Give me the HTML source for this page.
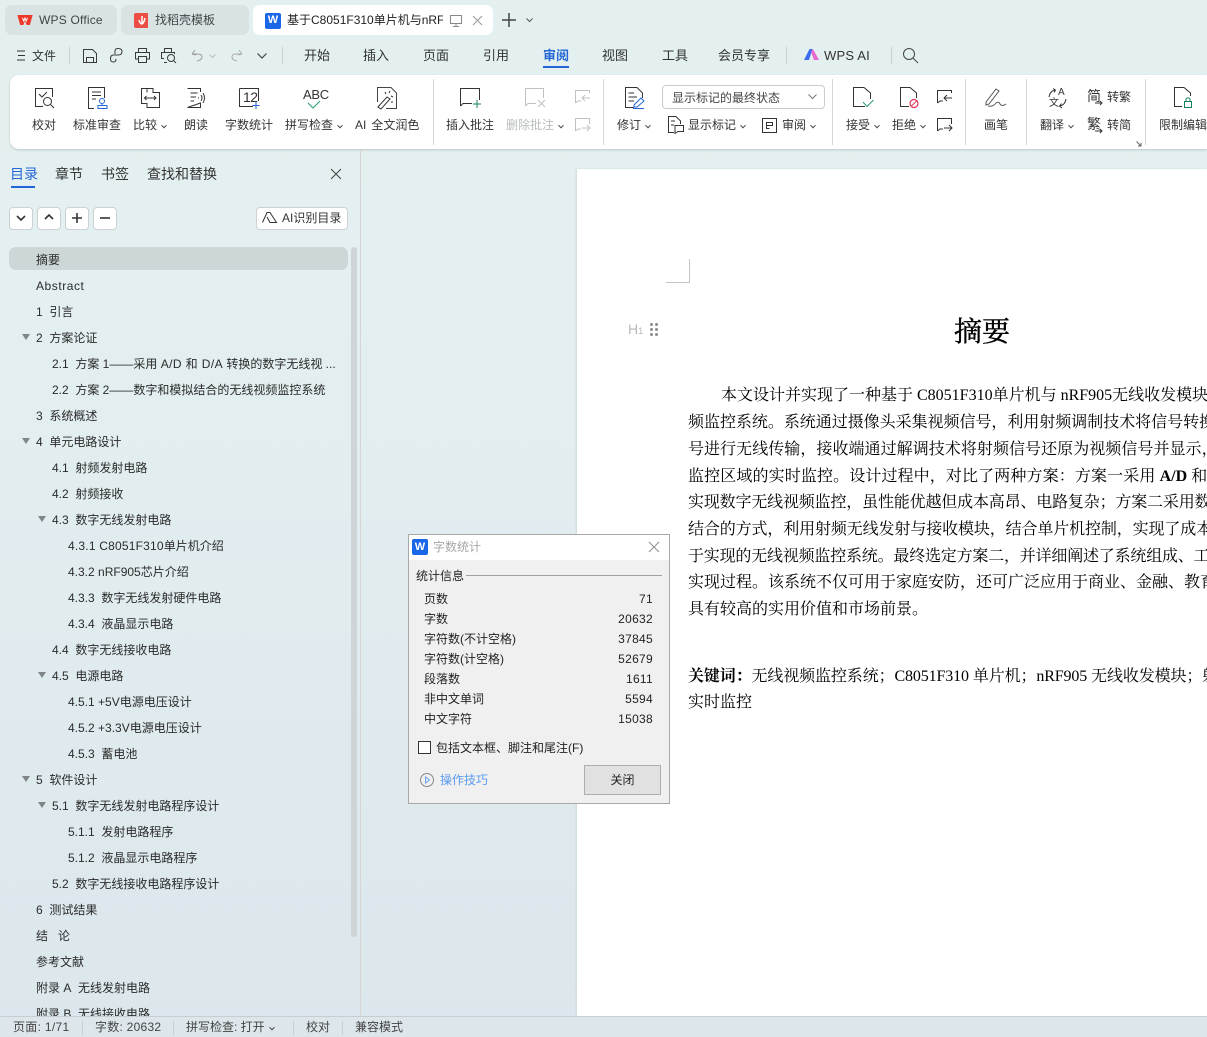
<!DOCTYPE html>
<html><head><meta charset="utf-8"><style>
html,body{margin:0;padding:0;width:1207px;height:1037px;overflow:hidden}
body{position:relative;background:linear-gradient(180deg,#e4f0f0 0,#e3eff0 300px,#dbe7ec 1037px);font-family:"Liberation Sans","Noto Sans CJK SC",sans-serif;font-size:12px;color:#333}
.a,.t,.c{position:absolute;white-space:nowrap}
.t{line-height:16px;height:16px}
.c{line-height:16px;height:16px;transform:translateX(-50%)}
svg{position:absolute;overflow:visible;fill:none;stroke:#333;stroke-width:1}
.m{font-size:13px;color:#333;top:48px}
.g{color:#b9bcbd}
.s{position:absolute;width:1px;background:#d4d8d8;top:79px;height:66px}
.v{position:absolute;width:1px;height:17px;top:47px;background:#c8d0d0}
.toc{position:absolute;font-size:12px;line-height:16px;color:#2b2b2b;white-space:nowrap;margin-top:1px}
.tri{position:absolute;width:0;height:0;border-left:4px solid transparent;border-right:4px solid transparent;border-top:6px solid #808587}
.btn{position:absolute;top:207px;width:22px;height:21px;background:#fff;border:1px solid #ccd2d3;border-radius:4px}
.d{position:absolute;left:688px;font-family:"Liberation Serif","Noto Serif CJK SC",serif;font-size:16px;line-height:26px;color:#000;white-space:nowrap}
.r{position:absolute;font-size:12px;line-height:16px;color:#222;white-space:nowrap;margin-top:1px}
.n{position:absolute;right:554px;font-size:12px;line-height:16px;color:#222;letter-spacing:.3px;margin-top:1px}
.ar:after{content:"";display:inline-block;width:3px;height:3px;border-right:1px solid #444;border-bottom:1px solid #444;transform:rotate(45deg) translate(-1px,-1px);margin-left:5px}
.tb{font-size:14px;top:166px}
</style></head><body>

<!-- tabs -->
<div class="a" style="left:5px;top:5px;width:112px;height:30px;background:#d9e3e4;border-radius:7px"></div>
<div class="a" style="left:121px;top:5px;width:128px;height:30px;background:#d9e3e4;border-radius:7px"></div>
<div class="a" style="left:253px;top:5px;width:240px;height:30px;background:#fff;border-radius:7px"></div>
<svg style="left:17px;top:14px" width="16" height="12"><path d="M1 1.500H15L12.500 10.500H10L8 5.500L6 10.500H3.500Z" fill="#ee3a2c" stroke="#ee3a2c" stroke-width="1"/><path d="M5.500 4L6.800 7L8 4L9.200 7L10.500 4" stroke="#fff" stroke-width="1"/></svg>
<div class="t" style="left:39px;top:12px;color:#3f4546;font-size:12px;letter-spacing:.2px">WPS Office</div>
<svg style="left:134px;top:13px" width="14" height="15"><path d="M2 0H14V15H2Q0 15 0 13V2Q0 0 2 0Z" fill="#ee4d45" stroke="none"/><path d="M8 3V11M5 7Q6 11 8 11Q10 10 11 5" stroke="#fff" stroke-width="1.500"/></svg>
<div class="t" style="left:155px;top:12px;color:#3f4546">找稻壳模板</div>
<div class="a" style="left:265px;top:13px;width:16px;height:16px;background:#1a66e8;border-radius:2px;color:#fff;font-weight:bold;font-size:11px;line-height:15px;text-align:center">W</div>
<div class="a" style="left:287px;top:12px;width:156px;height:16px;line-height:16px;overflow:hidden;color:#222">基于C8051F310单片机与nRF905</div>
<svg style="left:450px;top:15px" width="12" height="12"><path d="M.5 .5H11.500V8.500H.5ZM3 11.500H9M6 8.500V11.500" stroke="#888"/></svg>
<svg style="left:472px;top:15px" width="11" height="11"><path d="M1 1L10 10M10 1L1 10" stroke="#999"/></svg>
<svg style="left:502px;top:13px" width="14" height="14"><path d="M7 0V14M0 7H14" stroke="#444" stroke-width="1.500"/></svg>
<svg style="left:526px;top:18px" width="7" height="5"><path d="M.5 .5L3.500 3.500L6.500 .5" stroke="#555"/></svg>

<!-- menu row -->
<svg style="left:17px;top:50px" width="9" height="11"><path d="M0 1H8M1 5.500H8M0 10H8" stroke="#333"/></svg>
<div class="t" style="left:32px;top:48px">文件</div>
<div class="v" style="left:69px"></div>
<svg style="left:83px;top:49px" width="14" height="14"><path d="M.5 .5H9.500L13.500 4.500V13.500H.5ZM3.500 13.500V8.500H10.500V13.500" stroke="#3a3a3a"/></svg>
<svg style="left:110px;top:48px" width="13" height="16"><path d="M5 6V3Q5 .5 8 .5Q12 .5 12 3.500Q12 7 8 7H3.500Q.5 7 .5 10.500Q.5 14 3.500 14Q6 14 6 11" stroke="#3a3a3a"/></svg>
<svg style="left:135px;top:48px" width="15" height="15"><path d="M3.500 4.500V.5H11.500V4.500M3.500 11H.5V4.500H14.500V11H11.500M3.500 8.500H11.500V14.500H3.500Z" stroke="#3a3a3a"/></svg>
<svg style="left:161px;top:48px" width="16" height="15"><path d="M3.500 4.500V.5H10.500V4.500M3 10.500H.5V4.500H13.500V6M6 14.500H3" stroke="#3a3a3a"/><circle cx="10" cy="10" r="3.500" stroke="#3a3a3a"/><path d="M12.500 12.500L15 15" stroke="#3a3a3a"/></svg>
<svg style="left:191px;top:49px" width="12" height="13"><path d="M1 5L4 1M1 5L5 6M1 5H7Q11 5 11 8Q11 11 6 12" stroke="#999"/></svg>
<svg style="left:209px;top:54px" width="7" height="4"><path d="M.5 .5L3.500 3.500L6.500 .5" stroke="#bbb"/></svg>
<svg style="left:231px;top:49px" width="12" height="13"><path d="M11 5L8 1M11 5L7 6M11 5H5Q1 5 1 8Q1 11 6 12" stroke="#aaa"/></svg>
<svg style="left:257px;top:53px" width="10" height="6"><path d="M.5 .5L5 5L9.500 .5" stroke="#444" stroke-width="1.200"/></svg>
<div class="v" style="left:282px"></div>
<div class="t m" style="left:304px">开始</div>
<div class="t m" style="left:363px">插入</div>
<div class="t m" style="left:423px">页面</div>
<div class="t m" style="left:483px">引用</div>
<div class="t m" style="left:543px;color:#2567d6;font-weight:bold">审阅</div>
<div class="a" style="left:543px;top:66px;width:26px;height:2px;background:#2567d6"></div>
<div class="t m" style="left:602px">视图</div>
<div class="t m" style="left:662px">工具</div>
<div class="t m" style="left:718px">会员专享</div>
<div class="v" style="left:786px"></div>
<svg style="left:804px;top:49px" width="15" height="11"><path d="M0 11L5.500 0H8.500L5 11Z" fill="#3d6cf0" stroke="none"/><path d="M7 3L10 11H15L9 0Z" fill="#e66ad0" stroke="none"/></svg>
<div class="t" style="left:824px;top:48px;font-size:13px;color:#333;letter-spacing:.2px">WPS AI</div>
<div class="v" style="left:891px"></div>
<svg style="left:903px;top:48px" width="15" height="15"><circle cx="6" cy="6" r="5.500" stroke="#444"/><path d="M10 10L15 15" stroke="#444"/></svg>

<!-- ribbon -->
<div class="a" style="left:10px;top:75px;width:1197px;height:74px;background:#fff;border-radius:9px 0 0 9px;box-shadow:0 1px 2px #bcc8c8"></div>
<div class="s" style="left:433px"></div><div class="s" style="left:603px"></div><div class="s" style="left:832px"></div><div class="s" style="left:965px"></div><div class="s" style="left:1026px"></div><div class="s" style="left:1145px"></div>

<!-- ribbon icons -->
<svg style="left:35px;top:88px" width="20" height="21"><path d="M8 18.500H.5V.5H17.500V9M4 6L7 9L12 4" stroke="#333"/><circle cx="12.500" cy="13.500" r="4" stroke="#333"/><path d="M15.500 16.500L19 20" stroke="#333"/></svg>
<svg style="left:88px;top:87px" width="20" height="23"><path d="M6 21.500H.5V.5H16.500V11M4 5H13M4 8.500H13M4 12H8" stroke="#333"/><circle cx="14" cy="14" r="2.500" stroke="#2567d6"/><path d="M14 16.500V18M10 18.500H19V21.500H10Z" stroke="#2567d6"/></svg>
<svg style="left:141px;top:88px" width="19" height="20"><path d="M6 .5H.5V15.500H6V19.500H18.500V4.500H12V.5H6V4.500M3.500 10H15M5.500 8L3.500 10L5.500 12M13 8L15 10L13 12" stroke="#333"/></svg>
<svg style="left:187px;top:88px" width="19" height="20"><path d="M.5 .5H13.500L13.500 4M13.500 15V19.500H.5ZM3.500 5H10.500M3.500 9H9M3.500 13H7" stroke="#333"/><path d="M11 10H12M14 7Q16 10 14 13M16 5Q19 10 16 15" stroke="#333"/></svg>
<svg style="left:239px;top:88px" width="21" height="22"><path d="M.5 .5H19.500V13M14 18.500H.5V.5" stroke="#333"/><path d="M17 14V21M13.500 17.500H20.500" stroke="#2567d6"/></svg>
<div class="t" style="left:243px;top:89px;font-size:14px;color:#333;letter-spacing:-.5px">12</div>
<div class="t" style="left:303px;top:87px;font-size:13px;color:#333;letter-spacing:-.3px">ABC</div>
<svg style="left:307px;top:101px" width="15" height="9"><path d="M1 2L6 7L13 0" stroke="#2a9e6b"/></svg>
<svg style="left:377px;top:87px" width="20" height="23"><path d="M6 .5H14L19.500 6V21.500H9M.5 15V.5H6" stroke="#444"/><path d="M1 20L10 10L13 12L4 22Z" stroke="#333" fill="#fff"/><path d="M8 5L9 7M14 9L16 10M13 4L12 6M15 14L15 16" stroke="#333"/></svg>
<svg style="left:460px;top:88px" width="22" height="20"><path d="M.5 18V.5H19.500V12M.5 18L3 15.500H12" stroke="#333"/><path d="M17 12V20M13 16H21" stroke="#13845a"/></svg>
<svg style="left:525px;top:88px" width="21" height="20"><path d="M.5 18V.5H18.500V10M.5 18L3 15.500H11M13 12L20 19M20 12L13 19" stroke="#bfc2c3"/></svg>
<svg style="left:575px;top:90px" width="16" height="15"><path d="M.5 13V.5H14.500V3M.5 13L3 11H6M15 8H7M10 5L7 8L10 11" stroke="#bfc2c3"/></svg>
<svg style="left:575px;top:118px" width="16" height="15"><path d="M.5 13V.5H14.500V6M.5 13L3 11H6M7 10H15M12 7L15 10L12 13" stroke="#bfc2c3"/></svg>

<svg style="left:625px;top:87px" width="20" height="22"><path d="M9 20.500H.5V.5H12L17.500 6V11M3.500 6H9M3.500 10H12M3.500 14H9" stroke="#333"/><path d="M9 18L16 11L19 14L12 20H9Z" stroke="#2567d6"/><path d="M8 21.500H19" stroke="#2567d6"/></svg>
<svg style="left:668px;top:116px" width="16" height="18"><path d="M6 16.500H.5V.5H8L12.500 5V8M3 5H7M3 9H6" stroke="#333"/><path d="M6.500 9.500H15.500V15.500H10L7 17.500V9.500Z" stroke="#333"/></svg>
<svg style="left:762px;top:118px" width="15" height="15"><path d="M.5 .5H14.500V14.500H.5ZM4.500 4.500H10.500V7.500H4.500ZM4.500 7.500V10.500H7.500" stroke="#333"/></svg>
<div class="a" style="left:662px;top:85px;width:161px;height:22px;border:1px solid #c8ccce;border-radius:4px;background:#fff"></div>
<div class="t" style="left:672px;top:90px;color:#444">显示标记的最终状态</div>
<svg style="left:808px;top:94px" width="9" height="5"><path d="M.5 .5L4.500 4.500L8.500 .5" stroke="#777"/></svg>

<svg style="left:853px;top:87px" width="21" height="22"><path d="M12 19.500H.5V.5H11L17.500 6V12" stroke="#333"/><path d="M10 15L14 19.500L20.500 13" stroke="#2a9e6b"/></svg>
<svg style="left:900px;top:87px" width="20" height="22"><path d="M9 19.500H.5V.5H10L16.500 6V11" stroke="#333"/><circle cx="14" cy="16.500" r="4" stroke="#e0345a" stroke-width="1.200"/><path d="M11 19.500L17 13.500" stroke="#e0345a"/></svg>
<svg style="left:937px;top:90px" width="16" height="15"><path d="M.5 13V.5H14.500V3M.5 13L3 11H6M15 8H7M10 5L7 8L10 11" stroke="#333"/></svg>
<svg style="left:937px;top:118px" width="16" height="15"><path d="M.5 13V.5H14.500V6M.5 13L3 11H6M7 10H15M12 7L15 10L12 13" stroke="#333"/></svg>
<svg style="left:985px;top:88px" width="22" height="20"><path d="M1 14L11 1L14 3L4 16L1 17ZM3 18Q8 19 11 15Q14 13 15 16Q17 19 21 16" stroke="#555"/></svg>
<svg style="left:1048px;top:88px" width="19" height="21"><path d="M1 9Q2 3 7 2M5 .5L7.500 2L6 4.500M18 11Q17 17 12 18M14 20L11.500 18L13.500 15.500" stroke="#333"/></svg>
<div class="a" style="left:1058px;top:87px;font-size:10px;line-height:11px;color:#333">A</div>
<div class="a" style="left:1049px;top:98px;font-size:10px;line-height:11px;color:#333">文</div>
<div class="a" style="left:1087px;top:89px;font-size:14px;line-height:15px;color:#333">简</div>
<svg style="left:1095px;top:100px" width="8" height="6"><path d="M0 3H7M5 1L7 3L5 5" stroke="#333"/></svg>
<div class="a" style="left:1087px;top:117px;font-size:14px;line-height:15px;color:#333">繁</div>
<svg style="left:1095px;top:128px" width="8" height="6"><path d="M0 3H7M5 1L7 3L5 5" stroke="#333"/></svg>
<svg style="left:1136px;top:141px" width="6" height="6"><path d="M.5 .5L5 5M5 2V5H2" stroke="#666"/></svg>
<svg style="left:1174px;top:87px" width="19" height="22"><path d="M8 19.500H.5V.5H10L16.500 6V9" stroke="#333"/><rect x="10.500" y="14.500" width="7" height="6" stroke="#13845a"/><path d="M12 14V12Q14 9.500 16 12V14" stroke="#13845a"/></svg>

<!-- ribbon labels -->
<div class="c" style="left:44px;top:117px">校对</div>
<div class="c" style="left:97px;top:117px">标准审查</div>
<div class="t ar" style="left:133px;top:117px">比较</div>
<div class="c" style="left:196px;top:117px">朗读</div>
<div class="c" style="left:249px;top:117px">字数统计</div>
<div class="t ar" style="left:285px;top:117px">拼写检查</div>
<div class="t" style="left:355px;top:117px"><span style="margin-right:5px">AI</span>全文润色</div>
<div class="c" style="left:470px;top:117px">插入批注</div>
<div class="t g ar" style="left:506px;top:117px">删除批注</div>
<div class="t ar" style="left:617px;top:117px">修订</div>
<div class="t ar" style="left:688px;top:117px">显示标记</div>
<div class="t ar" style="left:782px;top:117px">审阅</div>
<div class="t ar" style="left:846px;top:117px">接受</div>
<div class="t ar" style="left:892px;top:117px">拒绝</div>
<div class="c" style="left:996px;top:117px">画笔</div>
<div class="t ar" style="left:1040px;top:117px">翻译</div>
<div class="t" style="left:1107px;top:89px">转繁</div>
<div class="t" style="left:1107px;top:117px">转简</div>
<div class="t" style="left:1159px;top:117px">限制编辑</div>

<!-- side panel -->
<div class="a" style="left:360px;top:150px;width:1px;height:866px;background:#d9d3d3"></div>
<div class="t tb" style="left:10px;color:#2567d6">目录</div>
<div class="a" style="left:11px;top:186px;width:24px;height:2px;background:#2567d6"></div>
<div class="t tb" style="left:55px">章节</div>
<div class="t tb" style="left:101px">书签</div>
<div class="t tb" style="left:147px">查找和替换</div>
<svg style="left:331px;top:169px" width="10" height="10"><path d="M0 0L10 10M10 0L0 10" stroke="#444"/></svg>
<div class="btn" style="left:9px"></div><div class="btn" style="left:37px"></div><div class="btn" style="left:65px"></div><div class="btn" style="left:93px"></div>
<svg style="left:16px;top:215px" width="10" height="6"><path d="M1 1L5 5L9 1" stroke="#333" stroke-width="1.600"/></svg>
<svg style="left:44px;top:214px" width="10" height="6"><path d="M1 5L5 1L9 5" stroke="#333" stroke-width="1.600"/></svg>
<svg style="left:72px;top:213px" width="10" height="10"><path d="M5 0V10M0 5H10" stroke="#333" stroke-width="1.600"/></svg>
<svg style="left:100px;top:217px" width="10" height="2"><path d="M0 1H10" stroke="#333" stroke-width="1.600"/></svg>
<div class="a" style="left:256px;top:207px;width:90px;height:21px;background:#fff;border:1px solid #ccd2d3;border-radius:4px"></div>
<svg style="left:262px;top:212px" width="15" height="11"><path d="M.5 10.500L5 .5H8L14.500 10.500H8L5 5" stroke="#333"/></svg>
<div class="t" style="left:282px;top:210px;color:#333">AI识别目录</div>

<div class="a" style="left:9px;top:247px;width:339px;height:23px;background:#ced7d8;border-radius:7px"></div>
<div class="a" style="left:351px;top:247px;width:6px;height:690px;background:#cdd5d6;border-radius:3px"></div>

<div class="toc" style="left:36px;top:251px">摘要</div>
<div class="toc" style="left:36px;top:277px;letter-spacing:.55px">Abstract</div>
<div class="toc" style="left:36px;top:303px">1&nbsp; 引言</div>
<div class="tri" style="left:22px;top:334px"></div><div class="toc" style="left:36px;top:329px">2&nbsp; 方案论证</div>
<div class="toc" style="left:52px;top:355px">2.1&nbsp; 方案 1——采用 <span style="letter-spacing:.4px">A/D 和 D/A</span> 转换的数字无线视 ...</div>
<div class="toc" style="left:52px;top:381px">2.2&nbsp; 方案 2——数字和模拟结合的无线视频监控系统</div>
<div class="toc" style="left:36px;top:407px">3&nbsp; 系统概述</div>
<div class="tri" style="left:22px;top:438px"></div><div class="toc" style="left:36px;top:433px">4&nbsp; 单元电路设计</div>
<div class="toc" style="left:52px;top:459px">4.1&nbsp; 射频发射电路</div>
<div class="toc" style="left:52px;top:485px">4.2&nbsp; 射频接收</div>
<div class="tri" style="left:38px;top:516px"></div><div class="toc" style="left:52px;top:511px">4.3&nbsp; 数字无线发射电路</div>
<div class="toc" style="left:68px;top:537px"><span style="letter-spacing:.2px">4.3.1 C8051F310</span>单片机介绍</div>
<div class="toc" style="left:68px;top:563px">4.3.2 nRF905芯片介绍</div>
<div class="toc" style="left:68px;top:589px">4.3.3&nbsp; 数字无线发射硬件电路</div>
<div class="toc" style="left:68px;top:615px">4.3.4&nbsp; 液晶显示电路</div>
<div class="toc" style="left:52px;top:641px">4.4&nbsp; 数字无线接收电路</div>
<div class="tri" style="left:38px;top:672px"></div><div class="toc" style="left:52px;top:667px">4.5&nbsp; 电源电路</div>
<div class="toc" style="left:68px;top:693px">4.5.1 +5V电源电压设计</div>
<div class="toc" style="left:68px;top:719px">4.5.2 +3.3V电源电压设计</div>
<div class="toc" style="left:68px;top:745px">4.5.3&nbsp; 蓄电池</div>
<div class="tri" style="left:22px;top:776px"></div><div class="toc" style="left:36px;top:771px">5&nbsp; 软件设计</div>
<div class="tri" style="left:38px;top:802px"></div><div class="toc" style="left:52px;top:797px">5.1&nbsp; 数字无线发射电路程序设计</div>
<div class="toc" style="left:68px;top:823px">5.1.1&nbsp; 发射电路程序</div>
<div class="toc" style="left:68px;top:849px">5.1.2&nbsp; 液晶显示电路程序</div>
<div class="toc" style="left:52px;top:875px">5.2&nbsp; 数字无线接收电路程序设计</div>
<div class="toc" style="left:36px;top:901px">6&nbsp; 测试结果</div>
<div class="toc" style="left:36px;top:927px">结&nbsp;&nbsp; 论</div>
<div class="toc" style="left:36px;top:953px">参考文献</div>
<div class="toc" style="left:36px;top:979px">附录 A&nbsp; 无线发射电路</div>
<div class="toc" style="left:36px;top:1005px">附录 B&nbsp; 无线接收电路</div>

<!-- document -->
<div class="a" style="left:577px;top:169px;width:630px;height:847px;background:#fff;box-shadow:-1px 0 2px #cfd8da"></div>
<div class="a" style="left:666px;top:259px;width:23px;height:23px;border-right:1px solid #c4c4c4;border-bottom:1px solid #c4c4c4"></div>
<div class="t" style="left:628px;top:321px;font-size:14px;color:#b8b8b8">H<span style="font-size:9px">1</span></div>
<svg style="left:650px;top:323px" width="8" height="13"><g fill="#8c8c8c" stroke="none"><circle cx="1.500" cy="1.500" r="1.500"/><circle cx="6.500" cy="1.500" r="1.500"/><circle cx="1.500" cy="6.500" r="1.500"/><circle cx="6.500" cy="6.500" r="1.500"/><circle cx="1.500" cy="11.500" r="1.500"/><circle cx="6.500" cy="11.500" r="1.500"/></g></svg>
<div class="a" style="left:954px;top:315px;font-family:'Liberation Serif','Noto Serif CJK SC',serif;font-size:28px;line-height:36px;color:#000;-webkit-text-stroke:.4px #000">摘要</div>
<div class="d" style="left:721px;top:383px">本文设计并实现了一种基于 C8051F310单片机与 nRF905无线收发模块</div>
<div class="d" style="top:410px;letter-spacing:-.03px">频监控系统。系统通过摄像头采集视频信号，利用射频调制技术将信号转换</div>
<div class="d" style="top:437px;letter-spacing:.05px">号进行无线传输，接收端通过解调技术将射频信号还原为视频信号并显示，</div>
<div class="d" style="top:464px;letter-spacing:.12px">监控区域的实时监控。设计过程中，对比了两种方案：方案一采用 <span style="letter-spacing:0;font-weight:bold">A/D</span> 和</div>
<div class="d" style="top:490px;letter-spacing:-.17px">实现数字无线视频监控，虽性能优越但成本高昂、电路复杂；方案二采用数</div>
<div class="d" style="top:517px;letter-spacing:-.12px">结合的方式，利用射频无线发射与接收模块，结合单片机控制，实现了成本</div>
<div class="d" style="top:544px;letter-spacing:-.2px">于实现的无线视频监控系统。最终选定方案二，并详细阐述了系统组成、工</div>
<div class="d" style="top:570px">实现过程。该系统不仅可用于家庭安防，还可广泛应用于商业、金融、教育</div>
<div class="d" style="top:597px">具有较高的实用价值和市场前景。</div>
<div class="d" style="top:664px;letter-spacing:-.12px"><b>关键词：</b>无线视频监控系统；C8051F310 单片机；nRF905 无线收发模块；射频</div>
<div class="d" style="top:690px">实时监控</div>

<!-- dialog -->
<div class="a" style="left:408px;top:534px;width:260px;height:268px;background:#f0f0f0;border:1px solid #a8a8a8"></div>
<div class="a" style="left:409px;top:535px;width:260px;height:25px;background:#fff"></div>
<div class="a" style="left:412px;top:539px;width:16px;height:16px;background:#1a66e8;border-radius:2px;color:#fff;font-weight:bold;font-size:11px;line-height:16px;text-align:center">W</div>
<div class="t" style="left:433px;top:539px;color:#a6a6a6">字数统计</div>
<svg style="left:648px;top:541px" width="12" height="12"><path d="M1 1L11 11M11 1L1 11" stroke="#8e8e8e"/></svg>
<div class="r" style="left:416px;top:567px">统计信息</div>
<div class="a" style="left:466px;top:575px;width:196px;height:1px;background:#a0a0a0"></div>
<div class="r" style="left:424px;top:590px">页数</div><div class="n" style="top:590px">71</div>
<div class="r" style="left:424px;top:610px">字数</div><div class="n" style="top:610px">20632</div>
<div class="r" style="left:424px;top:630px">字符数(不计空格)</div><div class="n" style="top:630px">37845</div>
<div class="r" style="left:424px;top:650px">字符数(计空格)</div><div class="n" style="top:650px">52679</div>
<div class="r" style="left:424px;top:670px">段落数</div><div class="n" style="top:670px">1611</div>
<div class="r" style="left:424px;top:690px">非中文单词</div><div class="n" style="top:690px">5594</div>
<div class="r" style="left:424px;top:710px">中文字符</div><div class="n" style="top:710px">15038</div>
<div class="a" style="left:418px;top:741px;width:11px;height:11px;border:1px solid #333;background:#fff"></div>
<div class="r" style="left:436px;top:739px">包括文本框、脚注和尾注(F)</div>
<svg style="left:420px;top:773px" width="14" height="14"><circle cx="7" cy="7" r="6.500" stroke="#888"/><path d="M5.500 4V10L9.500 7Z" stroke="#6a9fe8"/></svg>
<div class="t" style="left:440px;top:772px;color:#5a9cf0">操作技巧</div>
<div class="a" style="left:584px;top:765px;width:75px;height:28px;background:#e1e1e1;border:1px solid #adadad;text-align:center;line-height:28px;color:#222">关闭</div>

<!-- status bar -->
<div class="a" style="left:0;top:1016px;width:1207px;height:21px;background:#dde6ea;border-top:1px solid #c6ced2;box-sizing:border-box"></div>
<div class="t" style="left:13px;top:1019px;color:#444;letter-spacing:.3px">页面: 1/71</div>
<div class="a" style="left:82px;top:1021px;width:1px;height:14px;background:#c6ced2"></div>
<div class="t" style="left:95px;top:1019px;color:#444;letter-spacing:.25px">字数: 20632</div>
<div class="a" style="left:173px;top:1021px;width:1px;height:14px;background:#c6ced2"></div>
<div class="t ar" style="left:186px;top:1019px;color:#444">拼写检查: 打开</div>
<div class="a" style="left:293px;top:1021px;width:1px;height:14px;background:#c6ced2"></div>
<div class="t" style="left:306px;top:1019px;color:#444">校对</div>
<div class="a" style="left:342px;top:1021px;width:1px;height:14px;background:#c6ced2"></div>
<div class="t" style="left:355px;top:1019px;color:#444">兼容模式</div>
</body></html>
